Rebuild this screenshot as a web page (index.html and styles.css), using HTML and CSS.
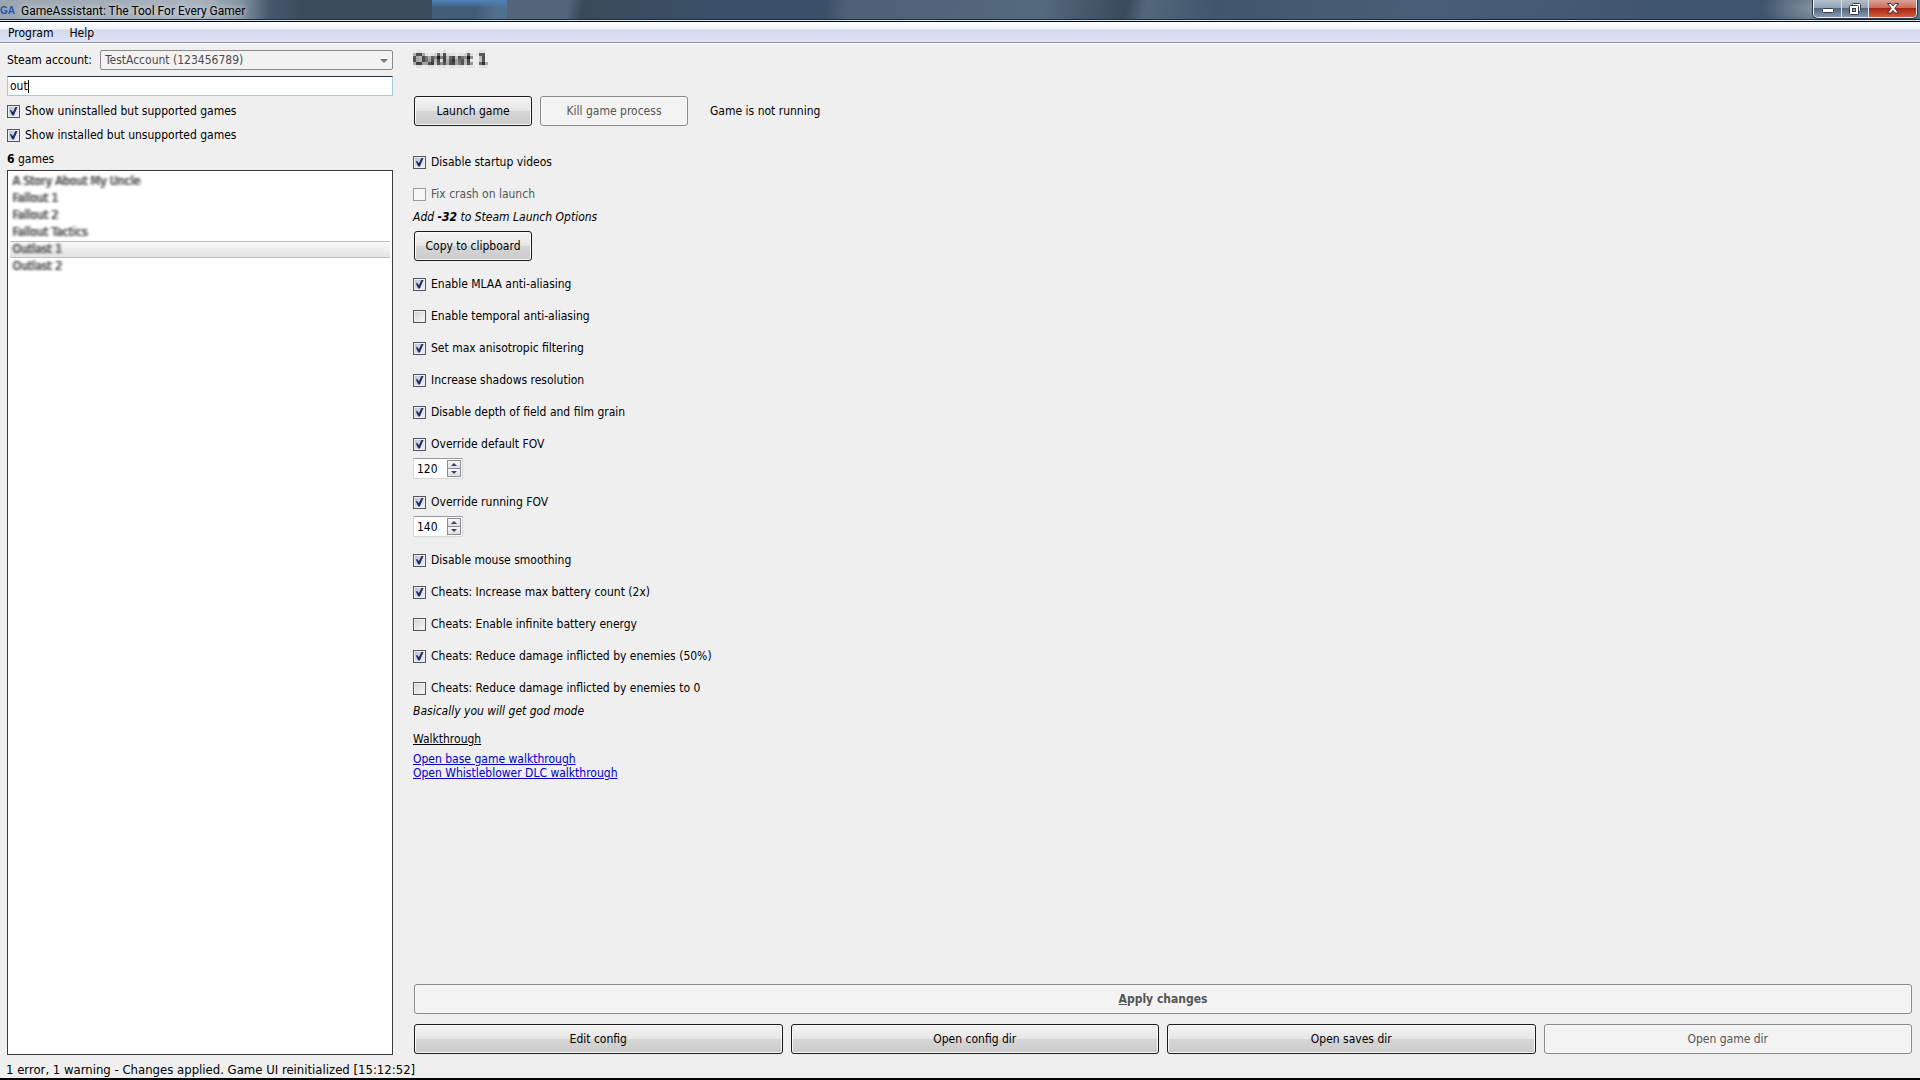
FILE: index.html
```html
<!DOCTYPE html>
<html lang="en">
<head>
    <meta charset="UTF-8">
    <title>GameAssistant: The Tool For Every Gamer</title>
    <link rel="stylesheet" href="styles.css">
</head>
<body>
    <!-- mosaic filter for the game name -->
    <svg class="defs" width="0" height="0" aria-hidden="true">
        <filter id="mosaic" x="0" y="0" width="100%" height="100%">
            <feGaussianBlur in="SourceGraphic" stdDeviation="1" result="soft"/>
            <feFlood x="1" y="1" width="1" height="1" flood-color="#000"/>
            <feComposite width="3" height="3"/>
            <feTile result="grid"/>
            <feComposite in="soft" in2="grid" operator="in"/>
            <feMorphology operator="dilate" radius="1"/>
        </filter>
    </svg>

    <header class="titlebar">
        <span class="app-icon">GA</span>
        <span class="app-title">GameAssistant: The Tool For Every Gamer</span>
        <div class="window-buttons">
            <button type="button" class="win-btn win-min" aria-label="Minimize">
                <svg width="12" height="6" viewBox="0 0 12 6"><rect x="0.5" y="0.5" width="11" height="4" rx="1" fill="#fff" stroke="#333c4a"/></svg>
            </button>
            <button type="button" class="win-btn win-max" aria-label="Restore">
                <svg width="12" height="12" viewBox="0 0 12 12">
                    <rect x="3.5" y="0.5" width="8" height="8" rx="1" fill="#fff" stroke="#333c4a"/>
                    <rect x="0.5" y="2.5" width="9" height="9" rx="1" fill="#fff" stroke="#333c4a"/>
                    <rect x="3.5" y="5.5" width="3" height="3" fill="#9aa8b8" stroke="#333c4a"/>
                </svg>
            </button>
            <button type="button" class="win-btn win-close" aria-label="Close">
                <svg width="12" height="11" viewBox="0 0 12 11"><path d="M0.5 0.5h3.5l2 2.500 2-2.500h3.500l-3.700 4.700 3.700 4.800h-3.500l-2-2.600-2 2.600h-3.500l3.700-4.800z" fill="#fff" stroke="#4a2a30"/></svg>
            </button>
        </div>
    </header>

    <nav class="menubar">
        <button type="button">Program</button>
        <button type="button">Help</button>
    </nav>

    <div class="content">
        <aside class="sidebar">
            <div class="account">
                <label for="account">Steam account:</label>
                <div class="combo">
                    <select id="account" disabled>
                        <option>TestAccount (123456789)</option>
                    </select>
                </div>
            </div>
            <input type="text" class="search" value="out" aria-label="Search games">
            <label class="check side-check"><input type="checkbox" checked>Show uninstalled but supported games</label>
            <label class="check side-check"><input type="checkbox" checked>Show installed but unsupported games</label>
            <p class="count"><b>6</b> games</p>
            <ul class="games" role="listbox" aria-label="Games">
                <li role="option"><span>A Story About My Uncle</span></li>
                <li role="option"><span>Fallout 1</span></li>
                <li role="option"><span>Fallout 2</span></li>
                <li role="option"><span>Fallout Tactics</span></li>
                <li role="option" class="selected" aria-selected="true"><span>Outlast 1</span></li>
                <li role="option"><span>Outlast 2</span></li>
            </ul>
        </aside>

        <main class="game">
            <h1>Outlast 1</h1>

            <div class="launch">
                <button type="button" class="btn btn-small">Launch game</button>
                <button type="button" class="btn btn-kill" disabled>Kill game process</button>
                <span class="state">Game is not running</span>
            </div>

            <div class="options">
                <label class="check"><input type="checkbox" checked>Disable startup videos</label>
                <div class="option">
                    <label class="check disabled"><input type="checkbox" disabled>Fix crash on launch</label>
                    <p class="hint">Add <b>-32</b> to Steam Launch Options</p>
                    <button type="button" class="btn btn-small">Copy to clipboard</button>
                </div>
                <label class="check"><input type="checkbox" checked>Enable MLAA anti-aliasing</label>
                <label class="check"><input type="checkbox">Enable temporal anti-aliasing</label>
                <label class="check"><input type="checkbox" checked>Set max anisotropic filtering</label>
                <label class="check"><input type="checkbox" checked>Increase shadows resolution</label>
                <label class="check"><input type="checkbox" checked>Disable depth of field and film grain</label>
                <div class="option">
                    <label class="check"><input type="checkbox" checked>Override default FOV</label>
                    <div class="spin">
                        <input type="number" value="120" aria-label="Default FOV">
                        <div class="spin-buttons">
                            <button type="button" class="up" aria-label="Increase"></button>
                            <button type="button" class="down" aria-label="Decrease"></button>
                        </div>
                    </div>
                </div>
                <div class="option">
                    <label class="check"><input type="checkbox" checked>Override running FOV</label>
                    <div class="spin">
                        <input type="number" value="140" aria-label="Running FOV">
                        <div class="spin-buttons">
                            <button type="button" class="up" aria-label="Increase"></button>
                            <button type="button" class="down" aria-label="Decrease"></button>
                        </div>
                    </div>
                </div>
                <label class="check"><input type="checkbox" checked>Disable mouse smoothing</label>
                <label class="check"><input type="checkbox" checked>Cheats: Increase max battery count (2x)</label>
                <label class="check"><input type="checkbox">Cheats: Enable infinite battery energy</label>
                <label class="check"><input type="checkbox" checked>Cheats: Reduce damage inflicted by enemies (50%)</label>
                <div class="option">
                    <label class="check"><input type="checkbox">Cheats: Reduce damage inflicted by enemies to 0</label>
                    <p class="hint">Basically you will get god mode</p>
                </div>
            </div>

            <section class="walkthrough">
                <h2>Walkthrough</h2>
                <a href="#base">Open base game walkthrough</a>
                <a href="#dlc">Open Whistleblower DLC walkthrough</a>
            </section>

            <div class="actions">
                <button type="button" class="btn apply" disabled><u>A</u>pply changes</button>
                <button type="button" class="btn">Edit config</button>
                <button type="button" class="btn">Open config dir</button>
                <button type="button" class="btn">Open saves dir</button>
                <button type="button" class="btn" disabled>Open game dir</button>
            </div>
        </main>
    </div>

    <footer class="statusbar">1 error, 1 warning - Changes applied. Game UI reinitialized [15:12:52]</footer>
</body>
</html>
```
FILE: styles.css
```css
* {
    box-sizing: border-box;
}

body {
    display: flex;
    flex-direction: column;
    min-height: 100vh;
    margin: 0;
    background-color: #efefef;
    color: #000;
    font-family: Tahoma, "DejaVu Sans Condensed", "DejaVu Sans", sans-serif;
    font-stretch: condensed;
    font-size: 12px;
    line-height: 18px;
}

button, input, select {
    font: inherit;
    color: inherit;
    margin: 0;
}

h1, h2, p, ul {
    margin: 0;
    padding: 0;
}

.defs {
    position: absolute;
}

/* Title bar */
.titlebar {
    display: flex;
    align-items: center;
    height: 22px;
    border-bottom: 1px solid #05060f;
    box-shadow: inset 0 -1px #dfe6ee, inset 0 -2px #1c2b3c;
    background:
        radial-gradient(ellipse 60px 24px at 1820px 8px, #8b97a3, transparent),
        linear-gradient(90deg, #9da6b0 0, #a9b3bd 200px, #8594a3 240px, #44586d 270px, transparent 300px),
        linear-gradient(#4c84b8 0, rgba(76, 132, 184, 0.3) 8px) 432px 0 / 75px 22px no-repeat,
        linear-gradient(100deg, #3d4e60 0, #3b4b5b 470px, #53657b 490px, #53657b 560px, #394a5a 575px, #3b5068 700px, #3b5068 815px, #4d6077 835px, #54687e 1030px, #384a5b 1110px, #53677c 1130px, #40566c 1200px, #4a5f77 1400px, #3f566e 1620px, #3d546d 1750px, #60788e 1920px);
}

.app-icon {
    width: 15px;
    color: #1c56b8;
    font-family: "Liberation Sans", Arial, sans-serif;
    font-size: 10px;
    font-weight: bold;
}

.app-title {
    margin-left: 6px;
    font-family: "Segoe UI", Roboto, sans-serif;
    font-stretch: normal;
    text-shadow: 0 0 6px #fff;
}

.window-buttons {
    display: flex;
    align-self: flex-start;
    height: 18px;
    margin-left: auto;
    margin-right: 3px;
    border: 1px solid #e8eef4;
    border-top: none;
    border-radius: 0 0 5px 5px;
    box-shadow: 0 0 0 1px #2c3746;
    overflow: hidden;
}

.win-btn {
    display: flex;
    align-items: center;
    justify-content: center;
    width: 27px;
    padding: 0;
    border: none;
    border-right: 1px solid #dbe3ec;
    background: linear-gradient(#b4bfca 0, #93a2b2 45%, #55687e 50%, #8699ae 100%);
}

.win-min {
    width: 28px;
    padding-top: 4px;
}

.win-close {
    width: 47px;
    border-right: none;
    background: linear-gradient(#dba198 0, #c9705f 45%, #ab2410 50%, #cf5e3e 100%);
}

/* Menu */
.menubar {
    display: flex;
    height: 22px;
    border-bottom: 1px solid #fafafa;
    box-shadow: inset 0 -1px #9094b0;
    background: linear-gradient(#fff 0, #f0f3fa 7px, #d1d9eb 8px, #dfe4f6 20px);
}

.menubar button {
    height: 22px;
    padding: 0 8px;
    border: none;
    background: none;
}

/* Layout */
.content {
    display: flex;
    flex: 1;
    gap: 20px;
    padding: 6px 8px 0 7px;
}

.sidebar {
    display: flex;
    flex: 0 0 386px;
    flex-direction: column;
}

.account {
    display: flex;
    align-items: center;
    gap: 8px;
}

.combo {
    position: relative;
    flex: 1;
}

.combo::after {
    content: "";
    position: absolute;
    top: 9px;
    right: 5px;
    border: 4px solid transparent;
    border-top-color: #777;
    border-bottom: none;
}

.combo select {
    appearance: none;
    display: block;
    width: 100%;
    height: 20px;
    padding: 0 4px;
    border: 1px solid #8a8a8a;
    border-radius: 2px;
    background-color: #f2f2f2;
    color: #4c4c4c;
    opacity: 1;
}

.search {
    height: 20px;
    margin: 6px 0;
    padding: 0 2px;
    border: 1px solid #a6c8dc;
    border-top-color: #1f3450;
    border-radius: 1px;
    outline: none;
    background: linear-gradient(#000, #000) 20px 3px / 1px 13px no-repeat #fff;
}

.check {
    display: flex;
    align-items: center;
    gap: 5px;
    height: 18px;
}

.check input {
    appearance: none;
    position: relative;
    width: 13px;
    height: 13px;
    border: 1px solid #55565c;
    background: linear-gradient(135deg, #cfd2d6, #f6f6f6) content-box #f4f4f4;
    padding: 1px;
}

.check input:checked {
    background: linear-gradient(135deg, #b5c4da, #edf2fa) content-box #f4f4f4;
}

.check input:checked::before {
    content: "";
    position: absolute;
    inset: 1px;
    background-color: #202b5c;
    clip-path: polygon(8% 42%, 28% 42%, 43% 65%, 74% 0, 96% 0, 54% 100%, 36% 100%);
}

.check input:disabled {
    border-color: #9b9b9b;
    background: #f6f6f6;
}

.check.disabled {
    color: #555;
}

.side-check {
    margin-bottom: 6px;
}

.count {
    margin-bottom: 2px;
}

.games {
    flex: 1;
    padding: 2px;
    border: 1px solid #3a3a3f;
    background-color: #fff;
    list-style: none;
}

.games li {
    height: 17px;
    padding: 0 2px;
    line-height: 17px;
}

/* names are obscured */
.games span {
    display: inline-block;
    color: #444;
    filter: blur(1px);
    text-shadow: 2px 0 #777;
}

.games .selected {
    border-top: 1px solid #bdbdbd;
    border-bottom: 1px solid #bdbdbd;
    line-height: 15px;
    background: linear-gradient(#f8f8f8, #e4e4e4);
}

/* Game panel */
.game {
    display: flex;
    flex: 1;
    flex-direction: column;
}

.game h1 {
    align-self: flex-start;
    margin-bottom: 26px;
    font-size: 16px;
    line-height: 20px;
    filter: url(#mosaic);
}

.launch {
    display: flex;
    align-items: center;
    gap: 8px;
    margin: 0 0 27px 1px;
}

.state {
    margin-left: 14px;
}

.btn {
    height: 30px;
    padding: 0;
    border: 1px solid #1b1b1f;
    border-radius: 3px;
    background: linear-gradient(#f3f3f3 0, #e7e7e7 48%, #d6d6d6 50%, #cbcbcb 100%);
    box-shadow: inset 0 0 0 1px #f8f8f8;
}

.btn:disabled {
    border-color: #8b8b8b;
    background: #f3f3f3;
    color: #555;
}

.btn-small {
    width: 118px;
}

.btn-kill {
    width: 148px;
}

.options {
    display: flex;
    flex-direction: column;
    gap: 14px;
}

.option {
    display: flex;
    flex-direction: column;
    align-items: flex-start;
    gap: 5px;
}

.option .btn {
    margin-left: 1px;
}

.hint {
    font-style: italic;
}

.spin {
    display: flex;
    width: 50px;
    height: 21px;
    padding: 1px;
    border: 1px solid #d5d5dc;
    border-top-color: #9a9aa2;
    background-color: #fff;
}

.spin input {
    appearance: textfield;
    width: 32px;
    padding: 1px 0 0 2px;
    border: none;
    background: none;
    outline: none;
}

.spin input::-webkit-inner-spin-button {
    display: none;
}

.spin-buttons {
    display: flex;
    flex-direction: column;
    width: 14px;
    border: 1px solid #8c8c94;
}

.spin-buttons button {
    display: flex;
    flex: 1;
    align-items: center;
    justify-content: center;
    padding: 0;
    border: none;
    background: linear-gradient(#f6f6f6, #dedee2);
}

.spin-buttons .up {
    border-bottom: 1px solid #8c8c94;
}

.spin-buttons button::before {
    content: "";
    border: 3px solid transparent;
}

.spin-buttons .up::before {
    border-top: none;
    border-bottom-color: #3c4266;
}

.spin-buttons .down::before {
    border-bottom: none;
    border-top-color: #3c4266;
}

.walkthrough {
    display: flex;
    flex-direction: column;
    align-items: flex-start;
    margin-top: 12px;
    line-height: 14px;
}

.walkthrough h2 {
    margin-bottom: 6px;
    font-size: 12px;
    font-weight: normal;
    text-decoration: underline;
}

.walkthrough a {
    color: #0000c8;
}

.actions {
    display: grid;
    grid-template-columns: repeat(4, 1fr);
    gap: 10px 8px;
    margin: auto 0 1px 1px;
}

.apply {
    grid-column: 1 / -1;
    font-weight: bold;
}

/* Status bar */
.statusbar {
    height: 25px;
    padding: 6px 6px 0;
    border-bottom: 2px solid #000;
    font-size: 13px;
}
```
